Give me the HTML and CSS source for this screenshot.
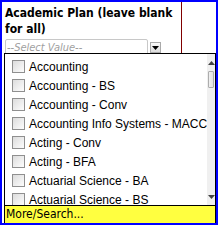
FILE: index.html
```html
<!DOCTYPE html>
<html>
<head>
<meta charset="utf-8">
<link rel="stylesheet" href="styles.css">
</head>
<body>
<div class="panel">
  <div class="cell">
    <div class="label">Academic Plan (leave blank for all)</div>
    <div class="selrow">
      <div class="selbox">--Select Value--</div>
      <div class="selbtn"><svg width="7" height="4" viewBox="0 0 7 4"><path d="M0 0H7L3.5 4Z" fill="#000"/></svg></div>
    </div>
  </div>
  <div class="popup">
    <div class="listarea">
      <div class="items">
        <div class="item"><span class="cb"></span>Accounting</div>
        <div class="item"><span class="cb"></span>Accounting - BS</div>
        <div class="item"><span class="cb"></span>Accounting - Conv</div>
        <div class="item"><span class="cb"></span>Accounting Info Systems - MACC</div>
        <div class="item"><span class="cb"></span>Acting - Conv</div>
        <div class="item"><span class="cb"></span>Acting - BFA</div>
        <div class="item"><span class="cb"></span>Actuarial Science - BA</div>
        <div class="item"><span class="cb"></span>Actuarial Science - BS</div>
      </div>
      <div class="scroll">
        <div class="arrow"><svg width="7" height="4" viewBox="0 0 7 4"><path d="M3.5 0L7 4H0Z" fill="#444"/></svg></div>
        <div class="thumb"></div>
        <div class="track"></div>
        <div class="arrow"><svg width="7" height="4" viewBox="0 0 7 4"><path d="M0 0H7L3.5 4Z" fill="#444"/></svg></div>
      </div>
    </div>
    <div class="more">More/Search...</div>
  </div>
</div>
</body>
</html>
```
FILE: styles.css
```css
html, body { margin: 0; padding: 0; background: #fff; }
.panel {
  position: relative;
  width: 214px;
  height: 221px;
  border: 2px solid #0000ff;
  overflow: hidden;
}
.cell {
  height: 60px;
  border-right: 1px solid #800000;
  padding: 3px 0 0 3px;
  box-sizing: border-box;
  width: 180px;
}
.label {
  font-family: "DejaVu Sans Condensed", "DejaVu Sans", sans-serif;
  font-stretch: condensed;
  font-weight: bold;
  font-size: 12px;
  line-height: 16px;
  color: #000;
}
.selrow { display: flex; align-items: center; margin-top: 2px; }
.selbox {
  width: 140px;
  height: 15px;
  border: 1px solid #c8c8c8;
  font-family: "DejaVu Sans Condensed", "DejaVu Sans", sans-serif;
  font-stretch: condensed;
  font-style: italic;
  font-size: 11px;
  line-height: 15px;
  color: #a0a0a0;
  padding-left: 1px;
  border-radius: 2px;
}
.selbtn {
  margin-left: 2px;
  width: 9px;
  height: 9px;
  border: 1px solid #aaa;
  background: linear-gradient(#fafafa, #dcdcdc);
  display: flex;
  align-items: center;
  justify-content: center;
}
.popup {
  position: absolute;
  left: 2px;
  top: 51px;
  width: 210px;
  height: 169px;
  border: 1px solid #000;
  background: #fff;
  display: flex;
  flex-direction: column;
}
.listarea { flex: 1; display: flex; overflow: hidden; }
.items { flex: 1; padding: 3px 0 0 7px; }
.item {
  display: flex;
  align-items: center;
  height: 19px;
  font-family: "Liberation Sans", Arial, sans-serif;
  font-size: 12px;
  color: #000;
  white-space: nowrap;
}
.cb {
  width: 11px;
  height: 11px;
  border: 1px solid #8f8f8f;
  background: linear-gradient(135deg, #dcdcdc, #fdfdfd);
  margin-right: 4px;
  flex: none;
}
.scroll {
  width: 16px;
  background: #f0f0f0;
  display: flex;
  flex-direction: column;
}
.arrow { height: 17px; display: flex; align-items: center; justify-content: center; }
.thumb {
  margin: 0 1px;
  height: 15px;
  border: 1px solid #adadad;
  background: linear-gradient(90deg, #f0f0f0, #e2e2e2);
  border-radius: 1px;
}
.track { flex: 1; }
.more {
  height: 17px;
  border-top: 1px solid #000;
  background: #ffff40;
  font-family: "DejaVu Sans Condensed", "DejaVu Sans", sans-serif;
  font-stretch: condensed;
  font-size: 12px;
  line-height: 17px;
  padding-left: 1px;
  color: #000;
}
```
